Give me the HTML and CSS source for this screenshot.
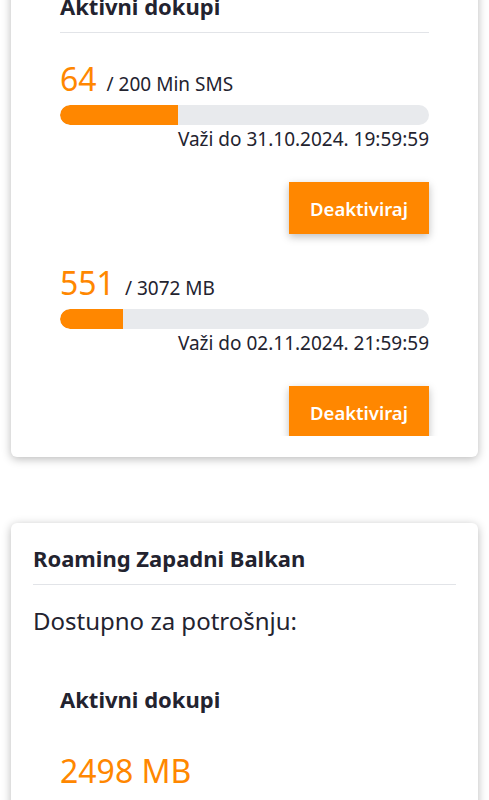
FILE: index.html
```html
<!DOCTYPE html>
<html lang="sr">
<head>
<meta charset="utf-8">
<title>Dokupi</title>
<link rel="stylesheet" href="styles.css">
</head>
<body>
<div class="page">
  <section class="card">
    <div class="addons addons--list">
      <h3 class="addons__title">Aktivni dokupi</h3>
      <div class="addons__list">
        <div class="addon">
          <div class="addon__amount"><span class="addon__left">64</span><span class="addon__total">/ 200 Min SMS</span></div>
          <div class="bar"><div class="bar__fill" style="width:32%"></div></div>
          <div class="addon__valid">Važi do 31.10.2024. 19:59:59</div>
          <div class="addon__actions"><button class="btn" type="button">Deaktiviraj</button></div>
        </div>
        <div class="addon">
          <div class="addon__amount"><span class="addon__left">551</span><span class="addon__total">/ 3072 MB</span></div>
          <div class="bar"><div class="bar__fill" style="width:17%"></div></div>
          <div class="addon__valid">Važi do 02.11.2024. 21:59:59</div>
          <div class="addon__actions"><button class="btn" type="button">Deaktiviraj</button></div>
        </div>
      </div>
    </div>
  </section>
  <section class="card">
    <h2 class="card__title">Roaming Zapadni Balkan</h2>
    <p class="card__subtitle">Dostupno za potrošnju:</p>
    <div class="addons addons--summary">
      <h3 class="addons__title">Aktivni dokupi</h3>
      <div class="addons__big">2498 MB</div>
    </div>
  </section>
</div>
</body>
</html>
```
FILE: styles.css
```css
html, body {
  margin: 0;
  padding: 0;
  background: #ffffff;
}
body {
  font-family: "Noto Sans", "Open Sans", sans-serif;
  color: #23232f;
  overflow: hidden;
}
.page {
  margin-top: -29px;
  padding: 0 11px;
  display: flex;
  flex-direction: column;
  gap: 66px;
}
.card {
  background: #ffffff;
  border-radius: 6px;
  box-shadow: 0 2px 10px rgba(0, 0, 0, 0.28);
  padding: 20px 22px 21px;
}
.card__title {
  margin: 0;
  font-size: 22px;
  line-height: 30px;
  font-weight: 700;
  padding-bottom: 11px;
  border-bottom: 1px solid #e2e4e8;
}
.card__subtitle {
  margin: 20px 0 0;
  font-size: 24px;
  line-height: 32px;
  font-weight: 400;
}
.addons {
  padding: 0 27px;
}
.addons--summary {
  margin-top: 47px;
}
.addons__title {
  margin: 0;
  font-size: 22px;
  line-height: 30px;
  font-weight: 700;
}
.addons--list .addons__title {
  padding-bottom: 11px;
  border-bottom: 1px solid #e2e4e8;
}
.addons__list {
  height: 377px;
  overflow: hidden;
  margin: 0 -12px;
  padding: 26px 12px 0;
  display: flex;
  flex-direction: column;
  gap: 29px;
}
.addon__amount {
  display: flex;
  align-items: baseline;
  line-height: 40px;
  height: 40px;
}
.addon__left {
  font-size: 32px;
  color: #ff8700;
}
.addon__total {
  font-size: 19px;
  line-height: 1;
  margin-left: 10px;
}
.bar {
  margin-top: 6px;
  height: 20px;
  border-radius: 10px;
  background: #e8eaed;
  overflow: hidden;
}
.bar__fill {
  height: 100%;
  background: #ff8700;
  border-radius: 10px 0 0 10px;
}
.addon__valid {
  margin-top: 2px;
  text-align: right;
  font-size: 19px;
  line-height: 24px;
}
.addon__actions {
  margin-top: 31px;
  display: flex;
  justify-content: flex-end;
}
.btn {
  width: 140px;
  height: 52px;
  border: none;
  border-radius: 0;
  background: #ff8700;
  color: #ffffff;
  font-family: "Noto Sans", "Open Sans", sans-serif;
  font-size: 18.5px;
  font-weight: 600;
  box-shadow: 0 3px 8px rgba(0, 0, 0, 0.25);
  padding: 0;
}
.addons__big {
  margin-top: 35px;
  font-size: 32px;
  line-height: 44px;
  color: #ff8700;
}
```
